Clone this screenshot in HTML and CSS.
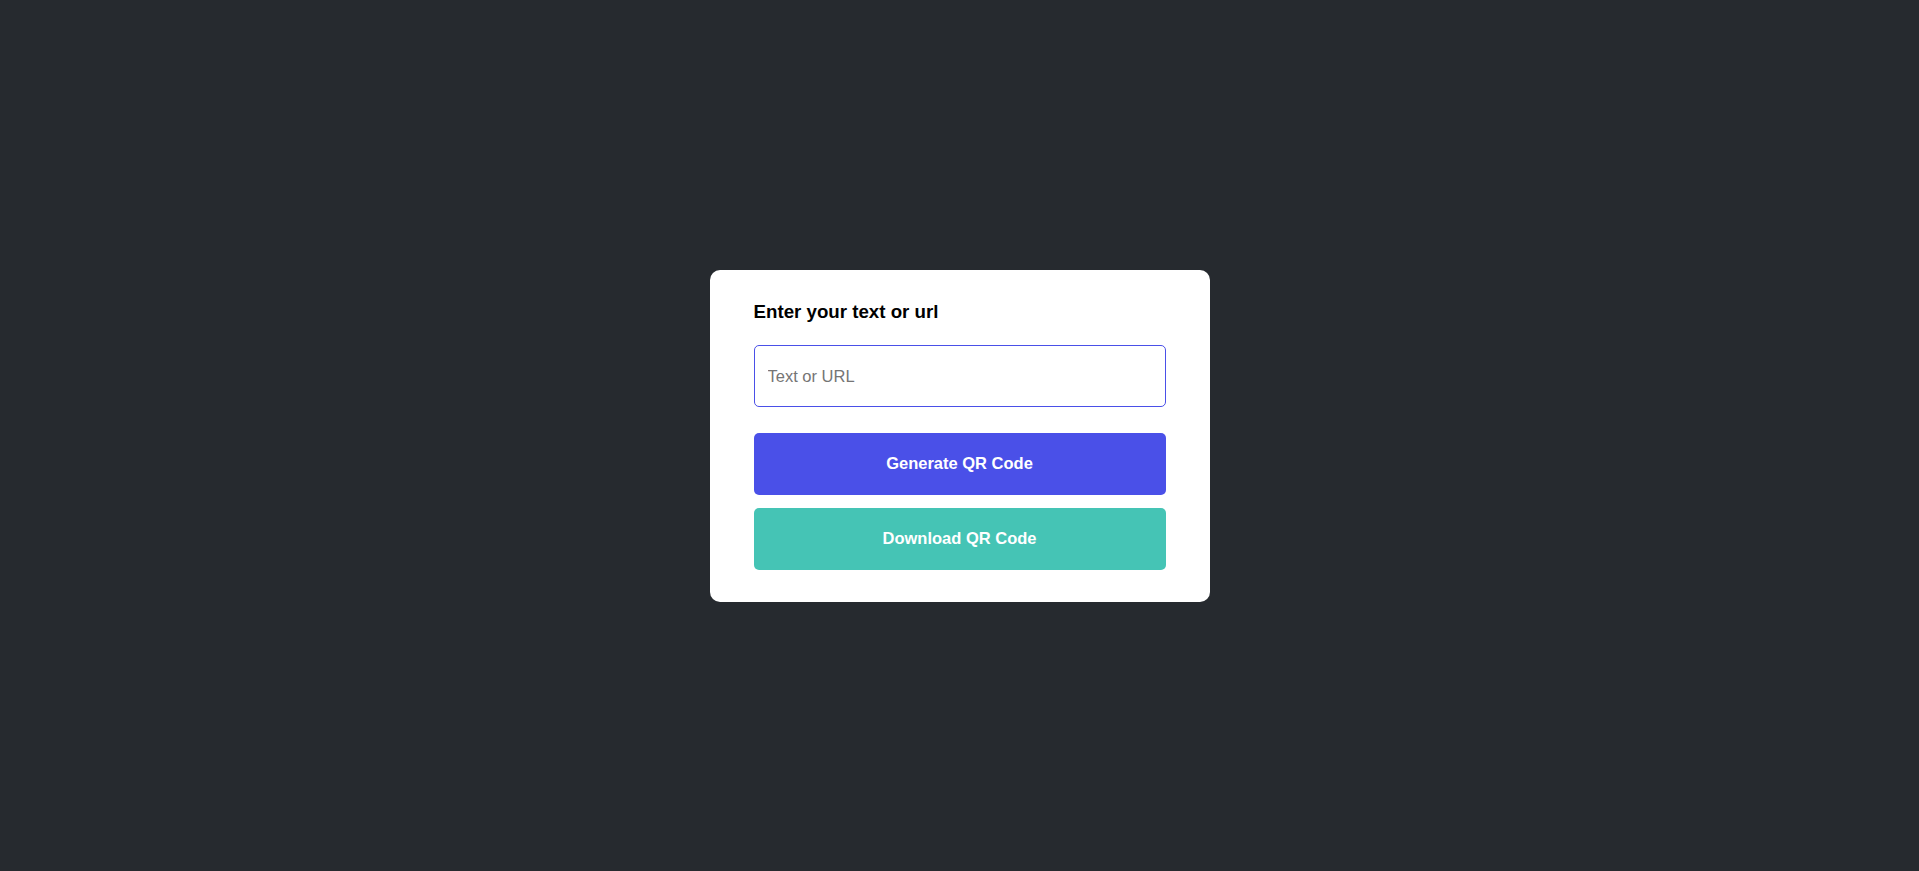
FILE: index.html
```html
<!DOCTYPE html>
<html lang="en">
<head>
<meta charset="UTF-8">
<title>QR Code Generator</title>
<link rel="stylesheet" href="styles.css">
</head>
<body>
  <main class="page">
    <div class="card">
      <h3 class="title">Enter your text or url</h3>
      <input class="field" type="text" placeholder="Text or URL">
      <button class="btn btn-generate">Generate QR Code</button>
      <button class="btn btn-download">Download QR Code</button>
    </div>
  </main>
</body>
</html>
```

FILE: styles.css
```css
* { box-sizing: border-box; }
html, body { margin: 0; padding: 0; }
body {
  background: #262a2f;
  font-family: "Liberation Sans", Arial, sans-serif;
}
.page {
  height: 100vh;
  display: flex;
  align-items: center;
  justify-content: center;
}
.card {
  width: 500px;
  background: #ffffff;
  border-radius: 10px;
  padding: 31px 44px 32px;
  display: flex;
  flex-direction: column;
}
.title {
  margin: 0 0 22px;
  font-size: 18.72px;
  line-height: 22px;
  font-weight: bold;
  color: #000;
}
.field {
  height: 62px;
  width: 100%;
  border: 1px solid #4a50e8;
  border-radius: 5px;
  padding: 2px 13px 0;
  font-family: "Liberation Sans", Arial, sans-serif;
  font-size: 16.5px;
  color: #000;
  outline: none;
  margin: 0 0 26px;
}
.field::placeholder { color: #757575; }
.btn {
  height: 62px;
  width: 100%;
  border: none;
  border-radius: 5px;
  color: #fff;
  font-family: "Liberation Sans", Arial, sans-serif;
  font-size: 16.5px;
  font-weight: bold;
  cursor: pointer;
}
.btn-generate { background: #4a50e8; margin-bottom: 13px; }
.btn-download { background: #45c4b5; }
```
